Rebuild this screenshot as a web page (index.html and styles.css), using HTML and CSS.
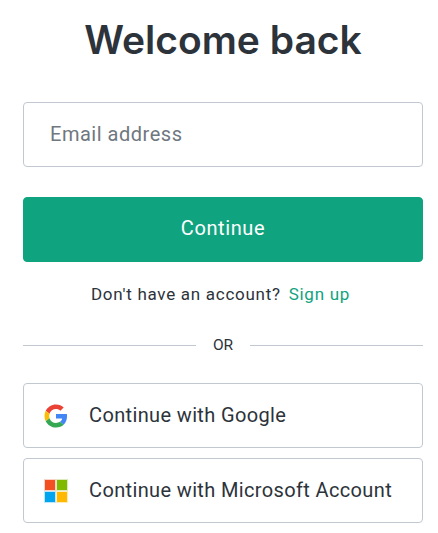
FILE: index.html
```html
<!DOCTYPE html>
<html lang="en">
<head>
    <meta charset="UTF-8">
    <meta name="viewport" content="width=device-width, initial-scale=1.0">
    <title>Welcome back</title>
    <link rel="stylesheet" href="styles.css">
</head>
<body>
    <main class="container">
        <h1>Welcome back</h1>

        <form class="login-form">
            <input type="email" name="email" placeholder="Email address" aria-label="Email address" required>
            <button type="submit" class="continue-btn"><span>Continue</span></button>
        </form>

        <p class="signup"><span>Don't have an account?</span> <a href="#">Sign up</a></p>

        <div class="divider"><span>OR</span></div>

        <div class="social">
            <button type="button" class="social-btn">
                <svg class="icon" viewBox="-1 -1 50 50">
                    <path fill="#EA4335" d="M24 9.5c3.54 0 6.71 1.22 9.21 3.6l6.85-6.85C35.9 2.38 30.47 0 24 0 14.62 0 6.51 5.38 2.56 13.22l7.98 6.19C12.43 13.72 17.74 9.5 24 9.5z"/>
                    <path fill="#4285F4" d="M46.98 24.55c0-1.57-.15-3.09-.38-4.55H24v9.02h12.94c-.58 2.96-2.26 5.48-4.78 7.18l7.73 6c4.51-4.18 7.09-10.36 7.09-17.65z"/>
                    <path fill="#FBBC05" d="M10.53 28.59c-.48-1.45-.76-2.99-.76-4.59s.27-3.14.76-4.59l-7.98-6.19C.92 16.46 0 20.12 0 24c0 3.88.92 7.54 2.56 10.78l7.97-6.19z"/>
                    <path fill="#34A853" d="M24 48c6.48 0 11.93-2.13 15.89-5.81l-7.73-6c-2.15 1.45-4.92 2.3-8.16 2.3-6.26 0-11.57-4.22-13.47-9.91l-7.98 6.19C6.51 42.62 14.62 48 24 48z"/>
                </svg>
                <span>Continue with Google</span>
            </button>
            <button type="button" class="social-btn">
                <svg class="icon" viewBox="0 0 24 24">
                    <path fill="#f9d3c5" d="M0 0h12v12H0z"/>
                    <path fill="#dcebbc" d="M12 0h12v12H12z"/>
                    <path fill="#bce6fb" d="M0 12h12v12H0z"/>
                    <path fill="#ffecba" d="M12 12h12v12H12z"/>
                    <path fill="#f25022" d="M1 1h10v10H1z"/>
                    <path fill="#7fba00" d="M13 1h10v10H13z"/>
                    <path fill="#00a4ef" d="M1 13h10v10H1z"/>
                    <path fill="#ffb900" d="M13 13h10v10H13z"/>
                </svg>
                <span>Continue with Microsoft Account</span>
            </button>
        </div>
    </main>
</body>
</html>
```
FILE: styles.css
```css
* {
    box-sizing: border-box;
}

body {
    font-family: Roboto, "Liberation Sans", sans-serif;
    background-color: #fff;
    color: #2d333a;
    margin: 0;
}

.container {
    width: 400px;
    margin: 0 auto 0 23px;
    padding-top: 16px;
}

h1 {
    font-family: Inter, sans-serif;
    font-size: 39px;
    font-weight: 600;
    line-height: 48px;
    text-align: center;
    margin: 0 0 38px;
}

.login-form {
    display: flex;
    flex-direction: column;
    gap: 30px;
}

input,
button {
    width: 100%;
    height: 65px;
    border: 1px solid #c2c8d0;
    border-radius: 4px;
    background-color: #fff;
    color: inherit;
    font-family: inherit;
    font-size: 20px;
}

input {
    padding: 0 26px 2px;
    letter-spacing: 0.52px;
}

    input::placeholder {
        color: #6f7780;
    }

button {
    cursor: pointer;
}

.continue-btn {
    background-color: #10a37f;
    border-color: #10a37f;
    color: #fff;
    letter-spacing: 0.6px;
    padding: 0 0 4px;
}

.signup {
    display: flex;
    justify-content: center;
    gap: 8px;
    font-size: 17px;
    line-height: 24px;
    letter-spacing: 0.72px;
    margin: 20px 0 0;
    padding-right: 5px;
}

    .signup a {
        color: #10a37f;
        text-decoration: none;
    }

.divider {
    display: flex;
    align-items: center;
    gap: 17px;
    font-size: 15.5px;
    line-height: 18px;
    margin: 30px 0 29px;
}

    .divider::before,
    .divider::after {
        content: "";
        flex: 1;
        height: 1px;
        background-color: #c2c8d0;
    }

.social {
    display: flex;
    flex-direction: column;
    gap: 10px;
}

.social-btn {
    display: flex;
    align-items: center;
    gap: 21px;
    padding: 0 20px;
    letter-spacing: 0.36px;
    white-space: nowrap;
}

    .social-btn span {
        padding-bottom: 2px;
    }

.icon {
    width: 24px;
    height: 24px;
    flex-shrink: 0;
}
```
